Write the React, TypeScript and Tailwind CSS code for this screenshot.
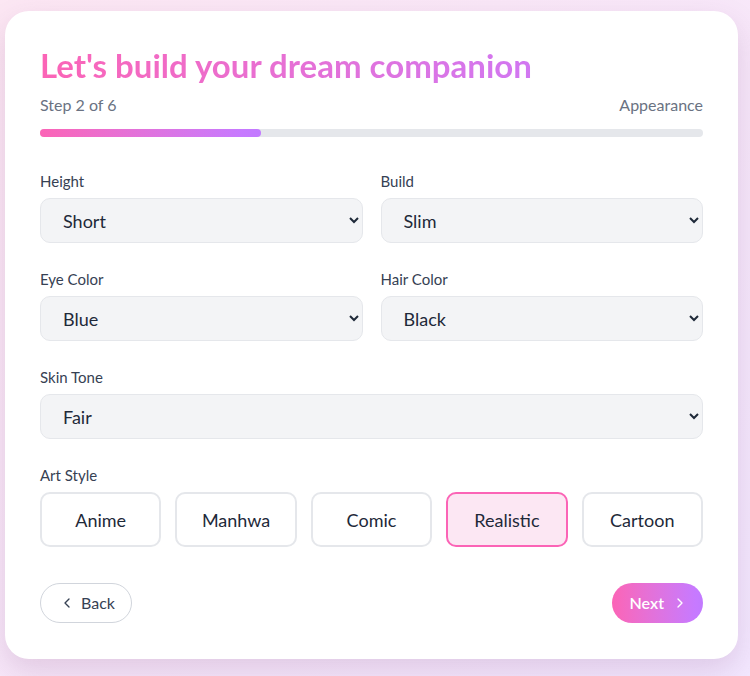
import { ChevronLeft, ChevronRight } from "lucide-react";

const fields = [
  { label: "Height", value: "Short", options: ["Short", "Average", "Tall"] },
  { label: "Build", value: "Slim", options: ["Slim", "Athletic", "Curvy"] },
  { label: "Eye Color", value: "Blue", options: ["Blue", "Brown", "Green"] },
  { label: "Hair Color", value: "Black", options: ["Black", "Blonde", "Red"] },
];

const artStyles = ["Anime", "Manhwa", "Comic", "Realistic", "Cartoon"];

const Field = ({ label, value, options }: { label: string; value: string; options: string[] }) => (
  <div className="flex flex-col">
    <label className="mb-[7px] text-[15px] leading-5 text-gray-700">{label}</label>
    <select
      defaultValue={value}
      className="h-[45px] w-full rounded-[10px] border border-gray-200 bg-gray-100 px-[18px] text-lg text-gray-800"
    >
      {options.map((o) => (
        <option key={o}>{o}</option>
      ))}
    </select>
  </div>
);

const App = () => {
  return (
    <div
      className="min-h-screen bg-gradient-to-br from-pink-100 to-purple-100 pl-[5px] pt-[11px] pb-4"
      style={{ fontFamily: "Lato, 'Noto Sans', sans-serif" }}
    >
      <div className="w-[733px] rounded-3xl bg-white px-[35px] py-9 shadow-[0_12px_30px_rgba(120,60,120,0.18)]">
        <h1 className="bg-gradient-to-r from-pink-400 to-purple-400 bg-clip-text text-[33px] leading-9 font-bold text-transparent">
          Let's build your dream companion
        </h1>
        <div className="mt-3 flex items-center justify-between text-base leading-5 text-gray-500">
          <span>Step 2 of 6</span>
          <span>Appearance</span>
        </div>
        <div className="mt-[14px] h-2 w-full rounded-full bg-gray-200">
          <div className="h-2 w-1/3 rounded-full bg-gradient-to-r from-pink-400 to-purple-400" />
        </div>

        <div className="mt-[34px] flex flex-col gap-[26px]">
          <div className="grid grid-cols-2 gap-x-[18px] gap-y-[26px]">
            {fields.map((f) => (
              <Field key={f.label} {...f} />
            ))}
          </div>
          <Field label="Skin Tone" value="Fair" options={["Fair", "Medium", "Olive", "Dark"]} />
          <div className="flex flex-col">
            <span className="mb-[7px] text-[15px] leading-5 text-gray-700">Art Style</span>
            <div className="grid grid-cols-5 gap-3.5">
              {artStyles.map((s) => (
                <button
                  key={s}
                  className={
                    s === "Realistic"
                      ? "h-[55px] rounded-[10px] border-2 border-pink-400 bg-pink-100 text-lg text-gray-800"
                      : "h-[55px] rounded-[10px] border-2 border-gray-200 bg-white text-lg text-gray-800"
                  }
                >
                  {s}
                </button>
              ))}
            </div>
          </div>
        </div>

        <div className="mt-9 flex items-center justify-between">
          <button className="flex h-10 items-center gap-1.5 rounded-full border border-gray-300 bg-white pl-[18px] pr-[16px] text-base text-gray-700">
            <ChevronLeft size={16} strokeWidth={2} />
            Back
          </button>
          <button className="flex h-10 items-center gap-2 rounded-full bg-gradient-to-r from-pink-400 to-purple-400 pl-[18px] pr-[15px] text-base font-semibold text-white">
            Next
            <ChevronRight size={16} strokeWidth={2} />
          </button>
        </div>
      </div>
    </div>
  );
};

export default App;
